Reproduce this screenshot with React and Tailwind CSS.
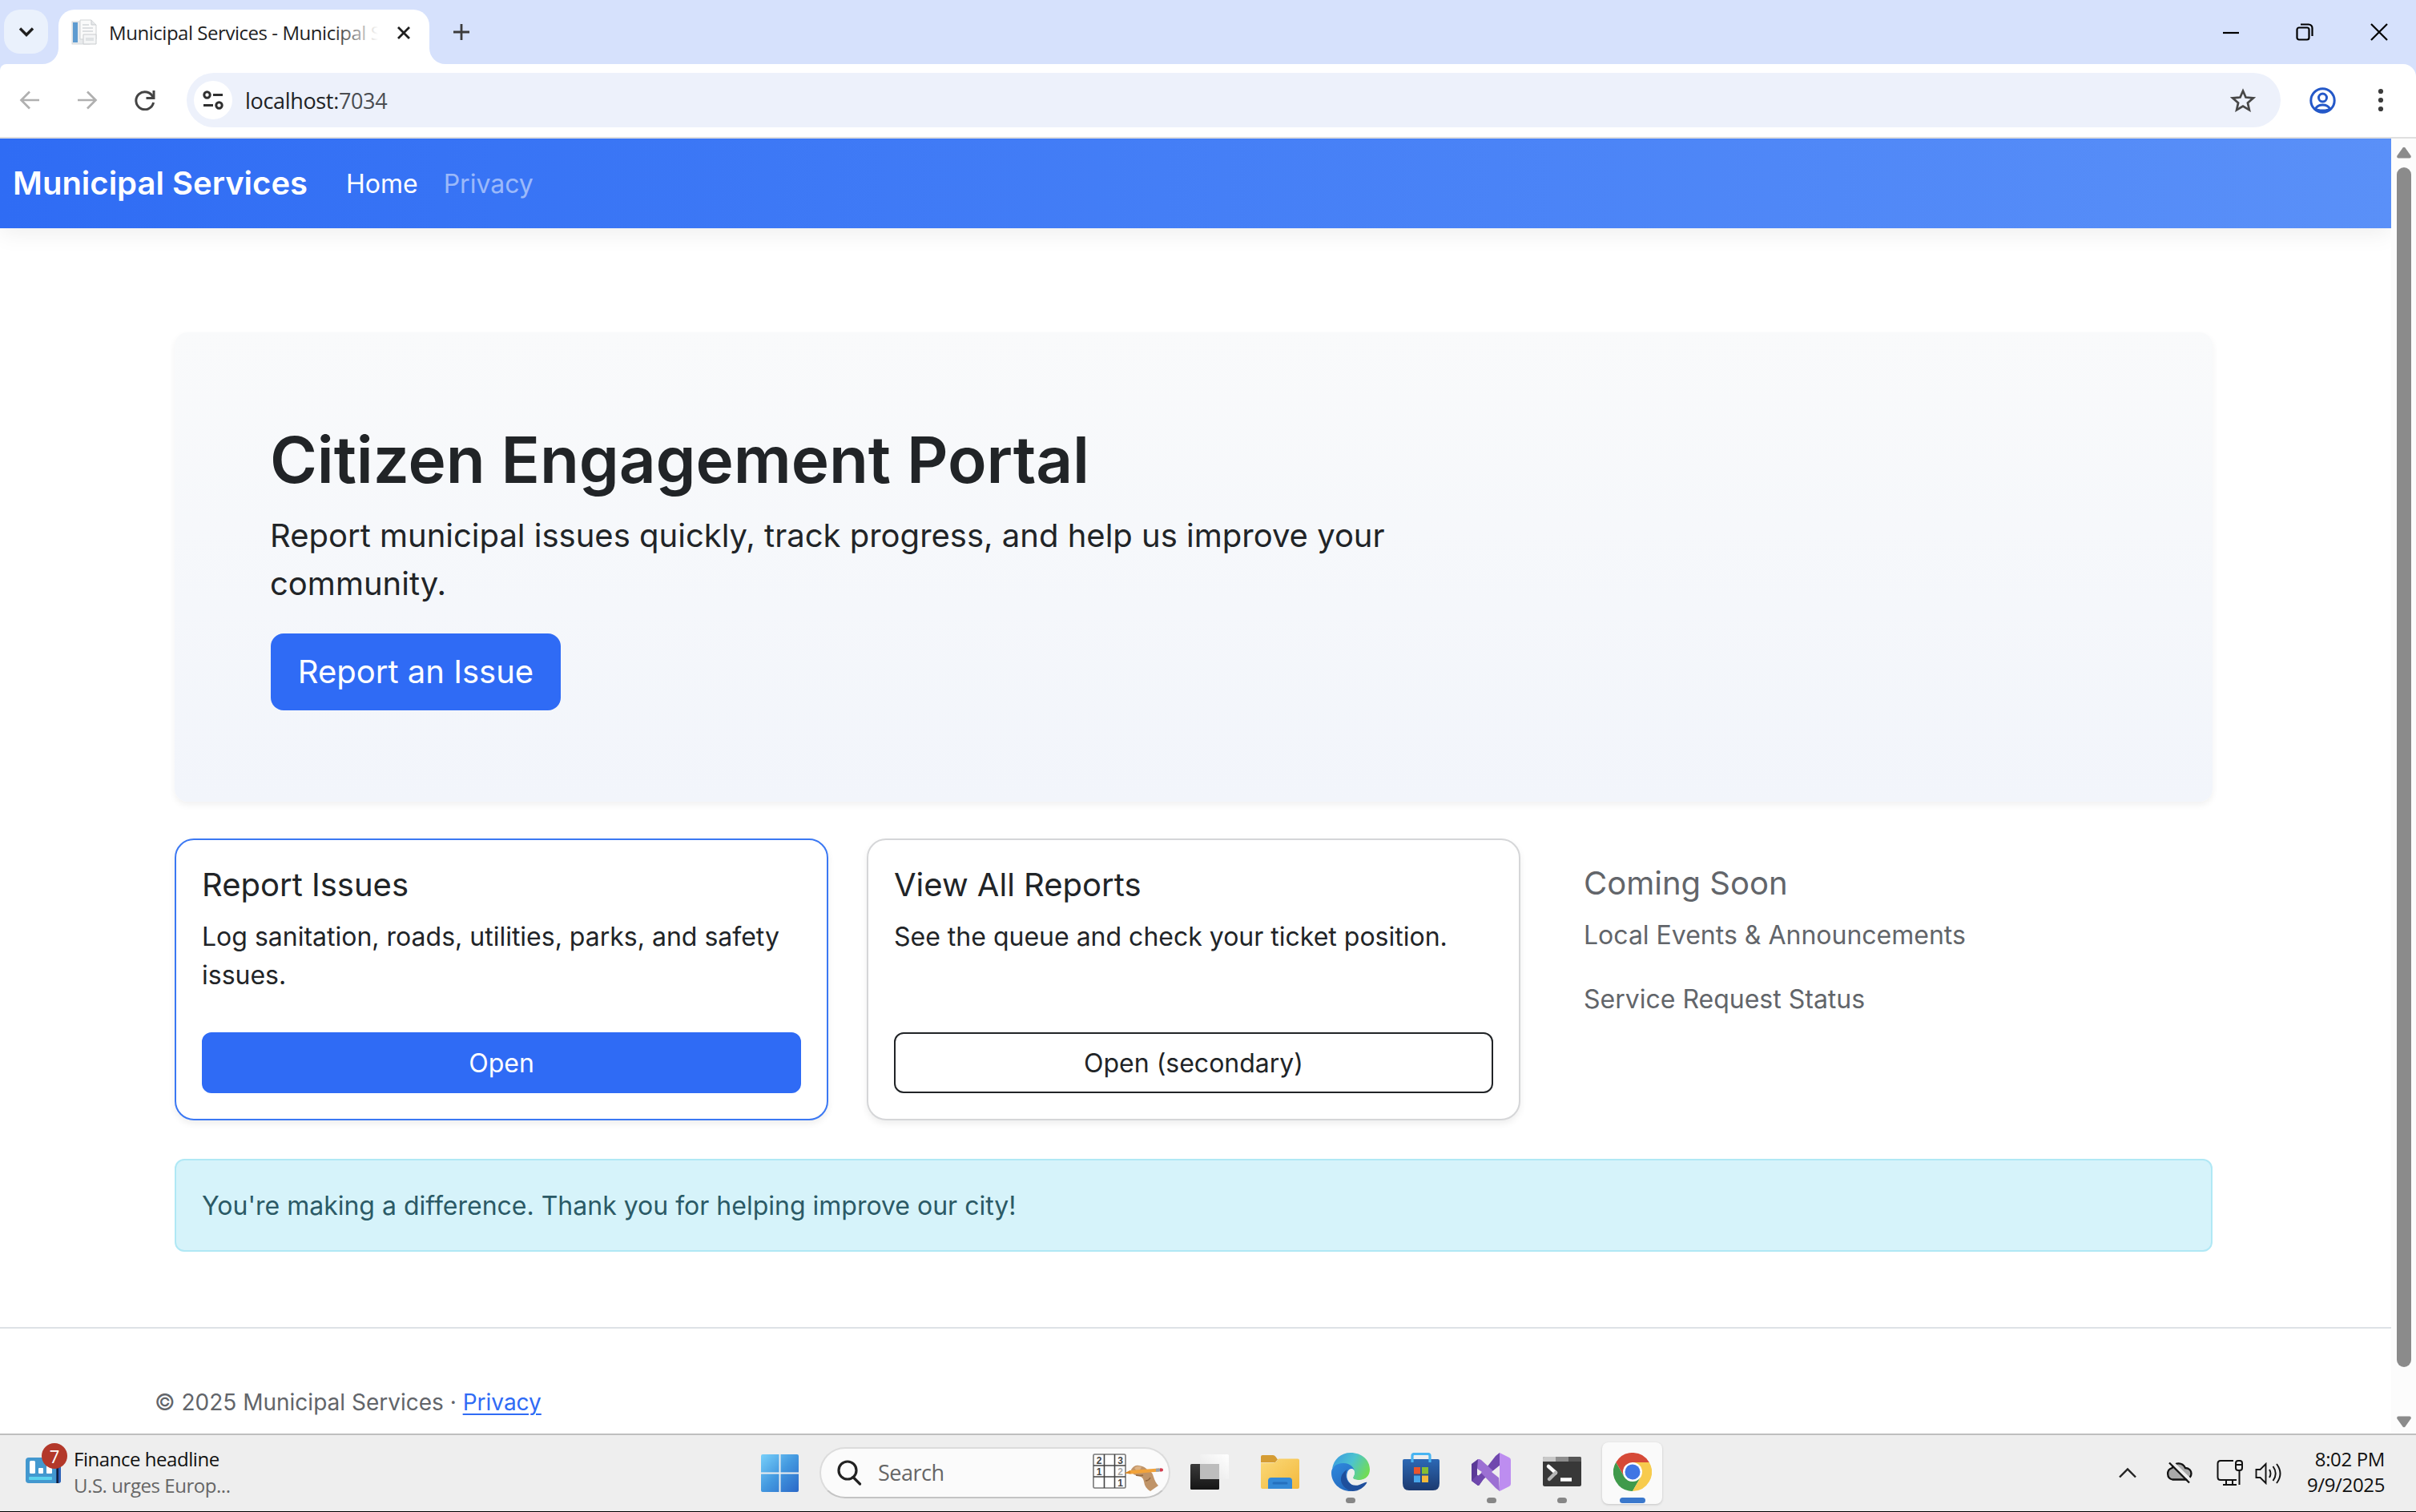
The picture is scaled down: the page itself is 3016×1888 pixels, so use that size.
import React from "react";

const ui = "font-['Open_Sans','Noto_Sans',sans-serif]";

/* ---------- Browser chrome ---------- */

function TabStrip() {
  return (
    <div className="flex h-[80px] shrink-0 bg-[#d6e1fc]">
      <div className="mt-[12px] ml-[5px] flex h-[55px] w-[55px] items-center justify-center rounded-[20px] bg-[#eaf1fc]">
        <svg width="20" height="14" viewBox="0 0 20 14" fill="none" stroke="#1f1f1f" strokeWidth="3.4">
          <path d="M2 2.5l8 8 8-8" />
        </svg>
      </div>
      <svg className="mt-[60px] ml-[-7px] shrink-0" width="20" height="20" viewBox="0 0 20 20">
        <path d="M20 0v20H0A20 20 0 0 0 20 0z" fill="#fff" />
      </svg>
      <div className="mt-[12px] flex h-[68px] w-[463px] items-center rounded-t-[20px] bg-white pb-[11px]">
        <svg className="ml-[16px] shrink-0" width="33" height="33" viewBox="0 0 33 33">
          <rect x="1" y="3" width="22" height="28" fill="#e8eaec" stroke="#d5d8da" />
          <rect x="2" y="4" width="6" height="25" fill="#5e9bd0" />
          <path d="M11 1h14l6 6v18H11z" fill="#fafafa" stroke="#d0d3d5" />
          <path d="M25 1v6h6" fill="#e6e8ea" stroke="#c9cccf" />
          <path d="M14 7h8M14 11h13M14 15h13" stroke="#dcdfe1" strokeWidth="2" />
          <path d="M15 19h16v12H15z" fill="#f4f5f6" stroke="#c9cccf" />
          <path d="M18 23h10v4H18z" fill="#dfe2e4" />
        </svg>
        <div className={`relative ml-[14px] h-[34px] w-[336px] overflow-hidden text-[24px] leading-[34px] tracking-[-0.46px] whitespace-nowrap text-[#1f1f1f] ${ui}`}>
          Municipal Services - Municipal S
          <div className="absolute inset-y-0 right-0 w-[58px] bg-gradient-to-r from-white/0 to-white" />
        </div>
        <svg className="ml-[23px] shrink-0" width="18" height="18" viewBox="0 0 18 18" stroke="#1f1f1f" strokeWidth="2.8">
          <path d="M2 2l14 14M16 2L2 16" />
        </svg>
      </div>
      <svg className="mt-[60px] shrink-0" width="20" height="20" viewBox="0 0 20 20">
        <path d="M0 0v20h20A20 20 0 0 1 0 0z" fill="#fff" />
      </svg>
      <svg className="mt-[29px] ml-[9px] shrink-0" width="22" height="22" viewBox="0 0 22 22" stroke="#3c3c3c" strokeWidth="2.8">
        <path d="M11 1v20M1 11h20" />
      </svg>
      <div className="mr-[34px] ml-auto flex items-center gap-[70px] text-black">
        <svg width="22" height="22" viewBox="0 0 22 22" stroke="#000" strokeWidth="2.2">
          <path d="M1 12h20" />
        </svg>
        <svg width="22" height="22" viewBox="0 0 22 22" fill="none" stroke="#000" strokeWidth="2.2">
          <rect x="1.5" y="5.5" width="15" height="15" rx="2.5" />
          <path d="M6 1.5h10a4.500 4.500 0 0 1 4.500 4.500v10" />
        </svg>
        <svg width="24" height="22" viewBox="0 0 24 22" stroke="#000" strokeWidth="2.2">
          <path d="M2 1l20 20M22 1L2 21" />
        </svg>
      </div>
    </div>
  );
}

function Toolbar() {
  return (
    <div className="flex h-[93px] shrink-0 bg-[#d6e1fc]">
      <div className="flex w-full items-start rounded-tr-[16px] rounded-tl-[8px] border-b-2 border-[#dfdfdf] bg-white pt-[11px]">
        <div className="flex h-[68px] items-center">
          <svg className="ml-[24px]" width="26" height="24" viewBox="0 0 26 24" fill="none" stroke="#b0b0b0" strokeWidth="2.700">
            <path d="M25 12H3M13 1.500L2.500 12 13 22.500" />
          </svg>
          <svg className="ml-[46px]" width="26" height="24" viewBox="0 0 26 24" fill="none" stroke="#b0b0b0" strokeWidth="2.700">
            <path d="M1 12h22M13 1.500L23.500 12 13 22.500" />
          </svg>
          <svg className="ml-[45px]" width="28" height="26" viewBox="0 0 28 26" fill="none" stroke="#444" strokeWidth="3">
            <path d="M24 9.500A11 11 0 1 0 24.600 16" />
            <path d="M25 1v9.500h-9.500" />
          </svg>
        </div>
        <div className="ml-[38px] flex h-[68px] w-[2614px] items-center rounded-full bg-[#edf1fb]">
          <div className="ml-[9px] flex size-[48px] items-center justify-center rounded-full bg-white">
            <svg width="26" height="24" viewBox="0 0 26 24" fill="none" stroke="#2f2f2f" strokeWidth="3">
              <circle cx="5.500" cy="5.500" r="3.700" />
              <path d="M13 5.500h12M1 18.500h12" />
              <circle cx="20.500" cy="18.500" r="3.700" />
            </svg>
          </div>
          <div className={`ml-[16px] pt-[1px] text-[27px] leading-[40px] tracking-[-0.33px] text-[#202124] ${ui}`}>
            localhost:<span className="text-[#4a4d52]">7034</span>
          </div>
          <svg className="mr-[31px] ml-auto" width="32" height="30" viewBox="0 0 32 30" fill="none" stroke="#474747" strokeWidth="2.700">
            <path d="M16 3.500l3.500 8 9.300.9-6.900 6 2 8.900L16 22.600l-7.900 4.700 2-8.900-6.900-6 9.300-.9z" />
          </svg>
        </div>
        <div className="flex h-[68px] flex-1 items-center">
          <svg className="ml-[36px]" width="33" height="33" viewBox="0 0 33 33" fill="none" stroke="#2458c8" strokeWidth="3">
            <circle cx="16.500" cy="16.500" r="14.700" />
            <circle cx="16.500" cy="13" r="5" />
            <path d="M7.500 27c2-4 5-5 9-5s7 1 9 5c-2.500 2.600-15.500 2.600-18 0z" />
          </svg>
          <svg className="ml-[52px]" width="8" height="30" viewBox="0 0 8 30" fill="#3c3c3c">
            <circle cx="4" cy="4" r="3.100" />
            <circle cx="4" cy="15" r="3.100" />
            <circle cx="4" cy="26" r="3.100" />
          </svg>
        </div>
      </div>
    </div>
  );
}

function Scrollbar() {
  return (
    <div className="flex w-[31px] shrink-0 flex-col items-center bg-[#fcfcfc]">
      <svg className="mt-[10px] shrink-0" width="18" height="15" viewBox="0 0 18 15" fill="#8b8b8b">
        <path d="M7.500 1.500Q9 0 10.500 1.500L17.600 11.500Q18.400 14.500 16 14.500H2Q-.4 14.500.4 11.500z" />
      </svg>
      <div className="mt-[11px] h-[1498px] w-[18px] shrink-0 rounded-full bg-[#8b8b8b]" />
      <svg className="mt-[61px] shrink-0" width="18" height="15" viewBox="0 0 18 15" fill="#8b8b8b">
        <path d="M7.500 13.500Q9 15 10.500 13.500L17.600 3.500Q18.400.5 16 .5H2Q-.4.5.4 3.500z" />
      </svg>
    </div>
  );
}

/* ---------- Site ---------- */

function Navbar() {
  return (
    <nav className="flex h-[112px] shrink-0 items-center bg-gradient-to-r from-[#2f6cf4] to-[#5a90f8] text-white shadow-[0_6px_28px_rgba(0,0,0,0.07)]">
      <div className="ml-[16px] text-[40px] leading-[60px] font-semibold">Municipal Services</div>
      <div className="ml-[48px] pt-[2px] text-[32px] leading-[48px]">Home</div>
      <div className="ml-[32px] pt-[2px] text-[32px] leading-[48px] text-white/50">Privacy</div>
    </nav>
  );
}

function Hero() {
  return (
    <section className="h-[586px] rounded-[16px] bg-gradient-to-b from-[#f9fafb] to-[#f2f5fb] pt-[111px] pl-[119px] shadow-[0_4px_8px_rgba(0,0,0,0.06)]">
      <h1 className="text-[80px] leading-[96px] font-semibold tracking-[-0.09px] text-[#212427]">Citizen Engagement Portal</h1>
      <p className="mt-[17px] w-[1480px] text-[40px] leading-[60px] text-[#212427]">
        Report municipal issues quickly, track progress, and help us improve your community.
      </p>
      <button className="mt-[32px] ml-[1px] flex h-[96px] w-[362px] items-center justify-center rounded-[16px] bg-[#2f6bf5] text-[40px] leading-[60px] text-white">
        Report an Issue
      </button>
    </section>
  );
}

function Card({ title, text, primary, action }) {
  return (
    <div
      className={`flex h-[352px] w-[816px] flex-col rounded-[24px] border-2 bg-white px-[32px] pt-[32px] shadow-[0_4px_8px_rgba(0,0,0,0.07)] ${
        primary ? "border-[#3b78f3]" : "border-[#d5d6d8]"
      }`}
    >
      <h2 className="text-[40px] leading-[48px] text-[#212427]">{title}</h2>
      <p className="mt-[17px] h-[96px] text-[32px] leading-[48px] text-[#212427]">{text}</p>
      <button
        className={`mt-[47px] flex h-[76px] items-center justify-center rounded-[12px] border-2 pt-[2px] text-[32px] leading-[48px] ${
          primary ? "border-[#2f6bf5] bg-[#2f6bf5] text-white" : "border-[#212427] bg-white text-[#212427]"
        }`}
      >
        {action}
      </button>
    </div>
  );
}

function Site() {
  return (
    <div className="flex min-w-0 flex-1 flex-col overflow-hidden bg-white font-[Inter,sans-serif]">
      <Navbar />
      <main className="mt-[130px] ml-[218px] w-[2544px]">
        <Hero />
        <div className="mt-[46px] flex gap-[48px]">
          <Card primary title="Report Issues" text="Log sanitation, roads, utilities, parks, and safety issues." action="Open" />
          <Card title="View All Reports" text="See the queue and check your ticket position." action="Open (secondary)" />
          <div className="pt-[32px] pl-[31px] text-[#62656a]">
            <h2 className="text-[40px] leading-[48px]">Coming Soon</h2>
            <p className="mt-[17px] text-[32px] leading-[48px]">Local Events &amp; Announcements</p>
            <p className="mt-[32px] text-[32px] leading-[48px]">Service Request Status</p>
          </div>
        </div>
        <div className="mt-[48px] flex h-[116px] items-center rounded-[12px] border-2 border-[#b0e8f5] bg-[#d6f3fa] pt-[2px] pl-[32px] text-[32px] leading-[48px] text-[#2b5a66]">
          You&apos;re making a difference. Thank you for helping improve our city!
        </div>
      </main>
      <footer className="mt-[94px] flex-1 border-t-2 border-[#dee2e6] pt-[71px] pl-[193px] text-[28px] leading-[42px] text-[#62656a]">
        © 2025 Municipal Services · <span className="text-[#2f6bf5] underline decoration-2 underline-offset-4">Privacy</span>
      </footer>
    </div>
  );
}

/* ---------- Taskbar ---------- */

function WindowsLogo() {
  return (
    <svg width="47" height="47" viewBox="0 0 47 47">
      <defs>
        <linearGradient id="win" x1="0" y1="0" x2="1" y2="1">
          <stop offset="0" stopColor="#78d0fa" />
          <stop offset=".5" stopColor="#4398df" />
          <stop offset="1" stopColor="#2a68c8" />
        </linearGradient>
      </defs>
      <path
        d="M2 0h20.500v22.500H0V2q0-2 2-2zM24.500 0H45q2 0 2 2v20.500H24.500zM0 24.500h22.500V47H2q-2 0-2-2zM24.500 24.500H47V45q0 2-2 2H24.500z"
        fill="url(#win)"
      />
    </svg>
  );
}

function SudokuArt() {
  return (
    <svg width="90" height="48" viewBox="0 0 90 48">
      <g fill="none" stroke="#777" strokeWidth="1.600">
        <rect x="1" y="1" width="40" height="42" rx="1.500" fill="#fff" />
        <path d="M14.500 1v42M27.500 1v42M1 15h40M1 29h40" stroke="#444" />
      </g>
      <g className="font-['Liberation_Sans']" fontSize="12" fontWeight="700" fill="#444" textAnchor="middle">
        <text x="8" y="13">2</text>
        <text x="34.500" y="13">3</text>
        <text x="8" y="27">1</text>
        <text x="34.500" y="27" fill="#aaa">2</text>
        <text x="34.500" y="41">1</text>
      </g>
      <path d="M48 20q4-6 10-5 7 1 10 5 7 3 8 9 2 7 6 11l-10 7q-7-4-8-12-1-5-4-6l-6-2q-5-1-6-7z" fill="#c09468" />
      <path d="M52 18q4-4 9-1-1 4-6 5z" fill="#dcb183" />
      <path d="M54 27q5 1 9 0M66 34q4 0 6-4" stroke="#94683f" strokeWidth="1.500" fill="none" />
      <path d="M40 24.500l7-3.500 36-2.500v4l-35 3z" fill="#f2a33a" />
      <path d="M40 24.500l7-3.500.5 4.500z" fill="#d8892a" />
      <path d="M79 18.800l5-.4v4l-5 .4z" fill="#9aa3ad" />
      <path d="M84 18.400q4-.3 4 2t-4 2z" fill="#d23c4e" />
    </svg>
  );
}

function TaskView() {
  return (
    <svg width="48" height="46" viewBox="0 0 48 46">
      <defs>
        <linearGradient id="tvd" x1="0" y1="0" x2="0" y2="1">
          <stop offset="0" stopColor="#3a3a3a" />
          <stop offset="1" stopColor="#151515" />
        </linearGradient>
        <linearGradient id="tvl" x1="1" y1="0" x2="0" y2="1">
          <stop offset="0" stopColor="#fff" />
          <stop offset="1" stopColor="#e4e4e4" />
        </linearGradient>
      </defs>
      <rect x="0" y="13" width="36" height="32" rx="1.500" fill="url(#tvd)" />
      <rect x="12" y="1" width="36" height="31" rx="1.500" fill="url(#tvl)" />
      <path d="M12 13h24v19H13q-1 0-1-1z" fill="#bdbdbd" />
    </svg>
  );
}

function Explorer() {
  return (
    <svg width="48" height="44" viewBox="0 0 48 44">
      <defs>
        <linearGradient id="fold" x1="0" y1="0" x2="1" y2="1">
          <stop offset="0" stopColor="#fbd978" />
          <stop offset="1" stopColor="#f3b93d" />
        </linearGradient>
      </defs>
      <path d="M2 1h13q2 0 3.500 2l2.500 3.500-3 3.500H0V3q0-2 2-2z" fill="#d59c33" />
      <path d="M0 10.500h16q2 0 3.500-1.800L22 5.500h24q2 0 2 2V41q0 2-2 2H2q-2 0-2-2z" fill="url(#fold)" />
      <path d="M9 43V33q0-4 4-4h22q4 0 4 4v10z" fill="#3489d6" />
      <path d="M16 36h16" stroke="#2470be" strokeWidth="3" strokeLinecap="round" />
    </svg>
  );
}

function Edge() {
  return (
    <svg width="48" height="48" viewBox="0 0 48 48">
      <defs>
        <linearGradient id="e1" x1="0" y1=".2" x2="1" y2=".6">
          <stop offset="0" stopColor="#3a9be0" />
          <stop offset=".5" stopColor="#4cc3cf" />
          <stop offset="1" stopColor="#72dc55" />
        </linearGradient>
        <linearGradient id="e2" x1="0" y1="0" x2=".6" y2="1">
          <stop offset="0" stopColor="#2f8ade" />
          <stop offset="1" stopColor="#2468bd" />
        </linearGradient>
      </defs>
      <path d="M1 20C3 8 12 0 24 0c14 0 24 9 24 21 0 8-6 13-13 13-5 0-8-1-8-3 0-1 2-3 2-6 0-5-5-10-12-10C9 15 3 17 1 20z" fill="url(#e1)" />
      <path d="M0 25c0-7 6-12 15-12 9 0 14 6 14 12 0-4-3-6-6-4-6 4-5 15 4 20l6 4c-3 2-6 3-9 3C11 48 0 38 0 25z" fill="url(#e2)" />
      <path d="M18 27c0 11 9 16 17 13 4-1 7-4 9.500-3-3 6-10 11-18 11C18 47 11 39 12 32c.5-5 4-9 8-11-1 1-2 3-2 6z" fill="#1f4f9c" />
      <path d="M29 25c0 3-2 5-2 6.500 0 2 4 2.500 8 2.500 5 0 9-2 11-5-1 5-6 9-12 9-7 0-14-5-14-12 0-4 3-6 5-6 3 0 4 3 4 5z" fill="#eeeeee" />
    </svg>
  );
}

function Store() {
  return (
    <svg width="46" height="47" viewBox="0 0 46 47">
      <defs>
        <linearGradient id="st" x1="0" y1="0" x2="0" y2="1">
          <stop offset="0" stopColor="#2c68b4" />
          <stop offset="1" stopColor="#1c3a70" />
        </linearGradient>
      </defs>
      <path d="M12 14V4q0-2.500 2.500-2.500h17Q34 1.500 34 4v10" fill="none" stroke="#48b4f2" strokeWidth="3.200" />
      <path d="M2 8h42q2 0 2 2v28q0 9-8 9H8q-8 0-8-9V10q0-2 2-2z" fill="url(#st)" />
      <path d="M12 8v4M34 8v4" stroke="#48b4f2" strokeWidth="3.200" />
      <path d="M14 18h8v8.500h-8z" fill="#e8562d" />
      <path d="M24 18h8v8.500h-8z" fill="#85bd33" />
      <path d="M14 28.500h8V37h-8z" fill="#48a6ea" />
      <path d="M24 28.500h8V37h-8z" fill="#f5b93a" />
    </svg>
  );
}

function VisualStudio() {
  return (
    <svg width="49" height="48" viewBox="0 0 49 48">
      <path d="M0 14l8-6 2 1v8l-3 3v8l3 3v9l-2 1-8-6z" fill="#5b3a97" />
      <path d="M7 28l9 3-6 9-2 1-8-6z" fill="#6e48ac" />
      <path d="M35 0v16L15 33l-6 8-2-11 9-8L30 4z" fill="#7048ae" />
      <path d="M8 8q2-.5 4 1l22 20 1 19-5-4L7 20z" fill="#9c70d3" />
      <path d="M35 0l12 6q2 1 2 3v30q0 2-2 3l-12 6z" fill="#bd8df0" />
      <path d="M35 16l-10 8 10 8z" fill="#eeeeee" />
      <path d="M7 20l6 4-6 4z" fill="#eeeeee" />
    </svg>
  );
}

function Terminal() {
  return (
    <svg width="48" height="38" viewBox="0 0 48 38">
      <rect width="48" height="37" rx="2.500" fill="#383838" />
      <path d="M2 0h14v6H0V2q0-2 2-2z" fill="#c8c8c8" />
      <path d="M16 0h16v6H16z" fill="#8d8d8d" />
      <path d="M32 0h14q2 0 2 2v4H32z" fill="#555" />
      <path d="M7 12l9 8" stroke="#fff" strokeWidth="4.500" strokeLinecap="round" />
      <path d="M16 20l-8 8" stroke="#b5b5b5" strokeWidth="4.500" strokeLinecap="round" />
      <path d="M22 28.500h14" stroke="#fff" strokeWidth="4.500" />
    </svg>
  );
}

function Chrome() {
  return (
    <svg width="48" height="48" viewBox="0 0 48 48">
      <path d="M3.200 12A24 24 0 0 1 44.800 12H24L13.600 30z" fill="#d64a38" />
      <path d="M3.200 12A24 24 0 0 0 24 48L34.400 30H13.600z" fill="#3f9a4b" />
      <path d="M44.800 12A24 24 0 0 1 24 48L34.400 30 24 12z" fill="#f7cb4d" />
      <circle cx="24" cy="24" r="12" fill="#fff" />
      <circle cx="24" cy="24" r="9.500" fill="#3f76e4" />
    </svg>
  );
}

function AppSlot({ children, state }) {
  return (
    <div
      className={`flex h-[77px] w-[75px] shrink-0 flex-col items-center rounded-[8px] ${
        state === "active" ? "bg-[#fafafa] shadow-[0_1px_3px_rgba(0,0,0,0.18)]" : ""
      }`}
    >
      <div className="flex h-[69px] items-center pt-[4px]">{children}</div>
      {state === "running" && <div className="h-[7px] w-[12px] rounded-full bg-[#868686]" />}
      {state === "active" && <div className="h-[7px] w-[32px] rounded-full bg-[#3a78cc]" />}
    </div>
  );
}

function Taskbar() {
  return (
    <div className={`flex h-[98px] shrink-0 border-t-2 border-b border-t-[#bfbfbf] border-b-black bg-[#eeeeee] ${ui}`}>
      <div className="flex w-[950px] shrink-0">
        <div className="relative mt-[28px] ml-[32px] h-[33px] w-[44px]">
          <svg width="44" height="33" viewBox="0 0 44 33">
            <rect width="44" height="32" rx="4" fill="#4398cf" />
            <path d="M38 8h6v21q0 3-3 3h-3z" fill="#2d62b8" />
            <rect x="5" y="4" width="7" height="16" rx="1.500" fill="#fff" />
            <rect x="16" y="13" width="6" height="7" rx="1" fill="#fff" />
            <rect x="26" y="9" width="7" height="11" rx="1" fill="#fff" />
            <rect x="4" y="24" width="29" height="4" rx="1" fill="#5ad2ee" />
            <path d="M38.500 13h2.500v19h-2.500z" fill="#10203c" />
          </svg>
          <div className="absolute top-[-18px] left-[20px] flex size-[32px] items-center justify-center rounded-full bg-[#b3382a] text-[22px] leading-none text-white">7</div>
        </div>
        <div className="mt-[13px] ml-[16px] text-[24px] leading-[33px] tracking-[-0.45px]">
          <div className="text-[#111]">Finance headline</div>
          <div className="text-[#666]">U.S. urges Europ...</div>
        </div>
      </div>
      <div className="mt-[24px] h-[47px]">
        <WindowsLogo />
      </div>
      <div className="mt-[15px] ml-[26px] flex h-[64px] w-[438px] shrink-0 items-center rounded-full border-2 border-[#dcdcdc] border-b-[#c4c4c4] bg-[#fbfbfb]">
        <svg className="ml-[19px]" width="32" height="32" viewBox="0 0 32 32" fill="none" stroke="#222" strokeWidth="3.200">
          <circle cx="14" cy="13" r="11" />
          <path d="M21 21.500l8.500 8.500" strokeLinecap="round" />
        </svg>
        <div className="ml-[20px] text-[27px] leading-[36px] tracking-[-0.5px] text-[#666]">Search</div>
        <div className="mr-[5px] ml-auto">
          <SudokuArt />
        </div>
      </div>
      <div className="mt-[9px] ml-[11px] flex gap-[13px]">
        <AppSlot><TaskView /></AppSlot>
        <AppSlot><Explorer /></AppSlot>
        <AppSlot state="running"><Edge /></AppSlot>
        <AppSlot><Store /></AppSlot>
        <AppSlot state="running"><VisualStudio /></AppSlot>
        <AppSlot state="running"><Terminal /></AppSlot>
        <AppSlot state="active"><Chrome /></AppSlot>
      </div>
      <div className="mr-[39px] ml-auto flex">
        <svg className="mt-[40px]" width="22" height="14" viewBox="0 0 22 14" fill="none" stroke="#222" strokeWidth="2.400">
          <path d="M1 12.500l10-10 10 10" />
        </svg>
        <svg className="mt-[33px] ml-[36px]" width="34" height="28" viewBox="0 0 34 28" fill="none" stroke="#111" strokeWidth="2.300">
          <path d="M9 22.500a7.500 7.500 0 0 1-.5-14.500C11 1 21 0 25 8c5 0 7.500 3.500 7.500 7s-3 7.500-7 7.500z" fill="#a8a8a8" />
          <path d="M5 1l26 25.500" stroke="#eee" strokeWidth="4" transform="translate(1.500 -2)" />
          <path d="M5 1.500l25 25" />
        </svg>
        <svg className="mt-[30px] ml-[30px]" width="34" height="34" viewBox="0 0 34 34" fill="none" stroke="#111" strokeWidth="2">
          <path d="M21 2H5Q1.500 2 1.500 5.500v17Q1.500 26 5 26h20M8 32h17M12 26v6M20 26v6" />
          <path d="M24 5q0-3 3-3h2q3 0 3 3v6q0 3-3 3h-2q-3 0-3-3zM24 7h8M28.500 14v18" />
        </svg>
        <svg className="mt-[34px] ml-[14px]" width="34" height="28" viewBox="0 0 34 28" fill="none" stroke="#111" strokeWidth="1.900">
          <path d="M1.500 9h5l7-7v24l-7-7h-5zM18 9q3 5 0 10M22.500 5q6.500 9 0 18M27 2q9 12 0 24" />
        </svg>
        <div className="mt-[14px] ml-[31px] text-right text-[24px] leading-[32px] tracking-[-0.36px] text-[#111]">
          <div>8:02 PM</div>
          <div>9/9/2025</div>
        </div>
      </div>
    </div>
  );
}

export default function App() {
  return (
    <div className="flex h-[1888px] w-[3016px] flex-col overflow-hidden bg-white">
      <TabStrip />
      <Toolbar />
      <div className="flex h-[1617px] shrink-0">
        <Site />
        <Scrollbar />
      </div>
      <Taskbar />
    </div>
  );
}
